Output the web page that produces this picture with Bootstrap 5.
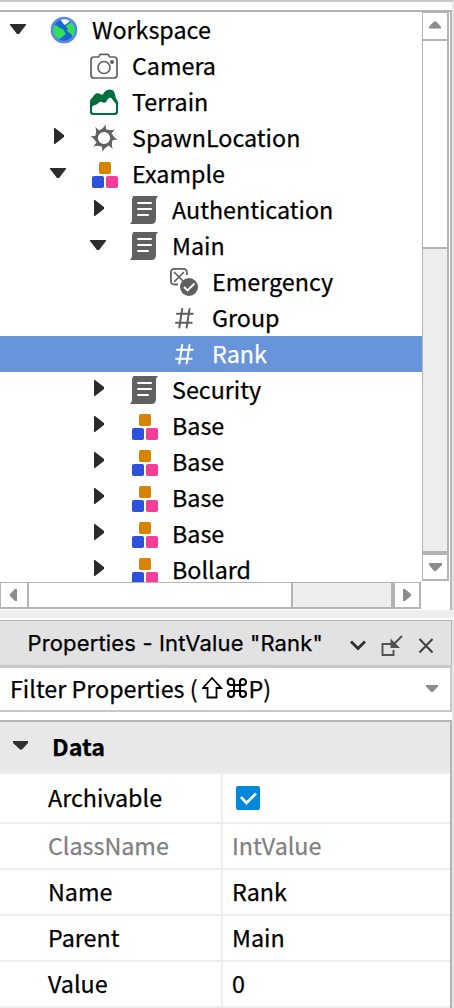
<!DOCTYPE html>
<html lang="en">
<head>
<meta charset="utf-8">
<meta name="viewport" content="width=device-width, initial-scale=1">
<title>Explorer</title>
<link href="https://cdn.jsdelivr.net/npm/bootstrap@5.3.0/dist/css/bootstrap.min.css" rel="stylesheet">
<style>
body{font-family:"Noto Sans CJK SC",sans-serif;font-size:23.3px;line-height:36px;color:#000;background:#fff;width:454px;height:1008px;overflow:hidden;-webkit-text-stroke:.25px currentColor}
svg{display:block;flex:none}
.explorer{height:610px;border-top:2px solid #c8c8c8;padding-top:8px;border-right:2px solid #e5e5e5}
.explorer-frame{height:600px;border-top:2px solid #b4b4b4;border-right:2px solid #b8b8b8}
.tree{width:422px;height:570px}
.tree-row{height:36px;padding-left:10px;white-space:nowrap}
.tree-row.l1{padding-left:50px}.tree-row.l2{padding-left:90px}.tree-row.l3{padding-left:130px}
.tree-row.selected{background:#6894d9;color:#fff}
.arrow{width:40px;height:28px;flex:none;color:#2c2c2c}
.label{margin-left:14px;line-height:34px;padding-bottom:2px}
.ico{color:#606060}
.selected .ico{color:#fff}
.vbar{width:27px;height:569px;border:solid #b4b4b4;border-width:1px 2px 2px 1px}
.vbar .b-top{height:28px;border-bottom:2px solid #b4b4b4}
.vbar .thumb{height:208px;border-bottom:2px solid #b4b4b4}
.vbar .track{background:#ededed}
.vbar .b-bot{height:28px;flex:none;border-top:4px solid #b4b4b4}
.hbar{width:421px;height:27px;border:solid #b4b4b4;border-width:1px 2px 2px 1px}
.hbar .b-left{width:28px;flex:none;border-right:2px solid #b4b4b4}
.hbar .thumb{width:264px;flex:none;border-right:2px solid #b4b4b4}
.hbar .track{background:#ededed}
.hbar .b-right{width:28px;flex:none;border-left:4px solid #b4b4b4}
.splitter{height:8px;background:#eee}
.props{height:390px;padding-top:2px}
.titlebar{height:45px;width:452px;background:#e2e2e2;border:solid #b4b4b4;border-width:1px 1px 0 0;font-family:Inter,sans-serif;font-size:22px;padding-left:27.500px}
.title-text{width:314.500px;letter-spacing:.15px;white-space:nowrap}
.filter{height:47px;width:452px;border:solid #c8c8c8;border-width:3px 2px 2px 0;padding:0 12px 0 10px}
.filter-text{padding-bottom:2px}
.grid-frame{margin-top:8px;width:452px;height:288px;border:solid #b4b4b4;border-width:2px 2px 0 0}
.group{height:52px;background:#e8e8e8;border-bottom:2px solid #eee;font-weight:700;padding-left:13px}
.group-name{margin-left:23px;padding-bottom:3px}
.prop{height:46px;border-bottom:2px solid #eee}
.prop.tall{height:50px}
.prop-key{width:223px;padding:0 0 2px 48px;border-right:2px solid #eee}
.prop-val{padding:0 0 2px 9px}
.check{margin:2px 0 0 4px}
.readonly{color:#808080}
.edge{background:#e5e5e5;width:2px}
</style>
</head>
<body>
<svg width="0" height="0" class="position-absolute">
<symbol id="down" viewBox="0 0 40 28"><path d="M0 8h16v1L9 18H7L0 9z" fill="currentColor"/></symbol>
<symbol id="right" viewBox="0 0 40 28"><path d="M4 4h1l9 7v2l-9 7H4z" fill="currentColor"/></symbol>
<symbol id="model" viewBox="0 0 28 28"><rect x="9" y="2" width="12" height="12" rx="1.8" fill="#d58300"/><rect x="2" y="16" width="12" height="12" rx="1.8" fill="#2c52dc"/><rect x="16" y="16" width="12" height="12" rx="1.8" fill="#f43e98"/></symbol>
<symbol id="script" viewBox="0 0 28 28"><path d="M3.500 0H28c-1.700 1.500-2 3-2 5v17c0 3-1 6-4 6H0c1.700-1.500 2-3 2-5V5c0-2 .3-4 1.500-5z" fill="#606060"/><path d="M8 7h13M8 13h13M8 19h10" stroke="#fff" stroke-width="2.100" stroke-linecap="round"/></symbol>
<symbol id="hash" viewBox="0 0 28 28"><path d="M12.200 5 9.300 23.500M19.500 5l-2.900 18.500M7 9.700h15.700M6 18.700h15.700" fill="none" stroke="currentColor" stroke-width="2" stroke-linecap="round"/></symbol>
<symbol id="globe" viewBox="0 0 28 28"><circle cx="14" cy="14" r="12.100" fill="#1668cf"/><path d="M3 8.500c2 .8 3.500.5 5 2 1.200 1.300 2.500 1.800 4.500 2.500 2 .8 1.500 3 2.700 4 .8.800.3 2-1 2.600-2.200.8-2 2.400-4.700 3.400C5.500 22 2.300 18.500 2 15zM16 9.500c1-1 3.700-1.800 5.300-4C24 7.500 25.800 11 26 14c0 3-1.300 6.500-3.700 8.500-1-1.500.5-3-1-4.500-1-1-3.500-1.200-4-3-.4-1.500.8-1.500.5-2.500-.3-1-2-1-1.800-3z" fill="#35de58"/><path d="M11 3c3-1 8-.6 10.200 1-1.500.8-2.500 2.500-4.200 3.500-1 .7-2 1.600-2.700 1.200C13 8 13 6 11 5z" fill="#fff"/><circle cx="14" cy="14" r="12" fill="none" stroke="#5388ed" stroke-width="2.600"/></symbol>
</svg>

<section class="explorer">
<div class="explorer-frame">
<div class="d-flex">
<div class="tree overflow-hidden">
<div class="tree-row d-flex align-items-center"><svg class="arrow"><use href="#down"/></svg><svg width="28" height="28"><use href="#globe"/></svg><span class="label">Workspace</span></div>
<div class="tree-row l1 d-flex align-items-center"><span class="arrow"></span><svg class="ico" width="28" height="28" viewBox="0 -1 28 28" fill="none" stroke="currentColor" stroke-width="1.700"><path d="M4 4h4.300c1 0 .9-2.700 2.300-2.700h7c1.400 0 1.300 2.700 2.300 2.700H24c2.200 0 3 .9 3 3v15c0 2.100-.8 3-3 3H4c-2.200 0-3-.9-3-3V7c0-2.100.8-3 3-3z"/><circle cx="14" cy="14.500" r="6"/><circle cx="22" cy="9" r="2" fill="currentColor" stroke="none"/></svg><span class="label">Camera</span></div>
<div class="tree-row l1 d-flex align-items-center"><span class="arrow"></span><svg width="28" height="28" viewBox="0 -.9 28 28"><path fill="#006f3c" fill-rule="evenodd" d="M0 13c0-3 2.500-4 4-6.500C6 3.500 9 4.200 11 5.500c1.500 1 2-.5 3.500-2.500C17 0 22-.5 24 2.800c1.500 2.700 1 5.700 3 8.200.8 1 1 2 1 3v9c0 2-1 3-3 3H3c-2 0-3-1-3-3zM2 20v2c0 1.300.7 2 2 2h20c1.300 0 2-.7 2-2v-6c0-2-2.200-3.500-3.500-5.500C21 8 18.500 8.500 17 11.500c-1 2-2.500 3-4.500 1.800-1.500-1-3-.5-4 .7S5.500 16 4 16.300C2.500 16.700 2 18 2 20z"/></svg><span class="label">Terrain</span></div>
<div class="tree-row l1 d-flex align-items-center"><svg class="arrow"><use href="#right"/></svg><svg width="28" height="28" viewBox="0 0 28 28"><g fill="#606060"><path id="ray" d="M10 6C13 4.500 14.500 2.500 15.500 0L16.200 7z"/><use href="#ray" transform="rotate(45 14 14)"/><use href="#ray" transform="rotate(90 14 14)"/><use href="#ray" transform="rotate(135 14 14)"/><use href="#ray" transform="rotate(180 14 14)"/><use href="#ray" transform="rotate(225 14 14)"/><use href="#ray" transform="rotate(270 14 14)"/><use href="#ray" transform="rotate(315 14 14)"/></g><circle cx="14" cy="14" r="7.500" fill="#fff" stroke="#606060" stroke-width="2.800"/></svg><span class="label">SpawnLocation</span></div>
<div class="tree-row l1 d-flex align-items-center"><svg class="arrow"><use href="#down"/></svg><svg width="28" height="28"><use href="#model"/></svg><span class="label">Example</span></div>
<div class="tree-row l2 d-flex align-items-center"><svg class="arrow"><use href="#right"/></svg><svg width="28" height="28"><use href="#script"/></svg><span class="label">Authentication</span></div>
<div class="tree-row l2 d-flex align-items-center"><svg class="arrow"><use href="#down"/></svg><svg width="28" height="28"><use href="#script"/></svg><span class="label">Main</span></div>
<div class="tree-row l3 d-flex align-items-center"><span class="arrow"></span><svg class="ico" width="28" height="28" viewBox="0 0 28 28" fill="none" stroke="currentColor"><path d="M8 16.500H4.500c-2.400 0-3.600-1.100-3.600-3.500V4.500C.9 2.100 2.100.9 4.500.9H13c2.400 0 3.900 1.200 3.900 3.600V7" stroke-width="1.800"/><path d="m4.500 4.500 9 9m0-9-9 9" stroke-width="1.700" stroke-linecap="round"/><circle cx="19" cy="19" r="9" fill="currentColor" stroke="none"/><path d="m14 19 3.500 3.500 7-7" stroke="#fff" stroke-width="1.900"/></svg><span class="label">Emergency</span></div>
<div class="tree-row l3 d-flex align-items-center"><span class="arrow"></span><svg class="ico" width="28" height="28"><use href="#hash"/></svg><span class="label">Group</span></div>
<div class="tree-row l3 d-flex align-items-center selected"><span class="arrow"></span><svg class="ico" width="28" height="28"><use href="#hash"/></svg><span class="label">Rank</span></div>
<div class="tree-row l2 d-flex align-items-center"><svg class="arrow"><use href="#right"/></svg><svg width="28" height="28"><use href="#script"/></svg><span class="label">Security</span></div>
<div class="tree-row l2 d-flex align-items-center"><svg class="arrow"><use href="#right"/></svg><svg width="28" height="28"><use href="#model"/></svg><span class="label">Base</span></div>
<div class="tree-row l2 d-flex align-items-center"><svg class="arrow"><use href="#right"/></svg><svg width="28" height="28"><use href="#model"/></svg><span class="label">Base</span></div>
<div class="tree-row l2 d-flex align-items-center"><svg class="arrow"><use href="#right"/></svg><svg width="28" height="28"><use href="#model"/></svg><span class="label">Base</span></div>
<div class="tree-row l2 d-flex align-items-center"><svg class="arrow"><use href="#right"/></svg><svg width="28" height="28"><use href="#model"/></svg><span class="label">Base</span></div>
<div class="tree-row l2 d-flex align-items-center"><svg class="arrow"><use href="#right"/></svg><svg width="28" height="28"><use href="#model"/></svg><span class="label">Bollard</span></div>
</div>
<div class="vbar d-flex flex-column">
<div class="b-top"><svg width="24" height="26"><path d="M6 15.500v-2l5-5h2l5 5v2z" fill="#8c8c8c"/></svg></div>
<div class="thumb flex-shrink-0"></div>
<div class="track flex-grow-1"></div>
<div class="b-bot"><svg width="24" height="24"><path d="M6 8v2l5 6h2l6-6V8z" fill="#8c8c8c"/></svg></div>
</div>
</div>
<div class="hbar d-flex">
<div class="b-left"><svg width="26" height="24"><path d="M16 6v12h-2l-5-5v-2l5-5z" fill="#8c8c8c"/></svg></div>
<div class="thumb"></div>
<div class="track flex-grow-1"></div>
<div class="b-right"><svg width="24" height="24"><path d="M8 6v12h2l6-5v-2l-6-5z" fill="#8c8c8c"/></svg></div>
</div>
</div>
</section>
<div class="splitter"></div>
<section class="props d-flex">
<div>
<header class="titlebar d-flex align-items-center">
<span class="title-text">Properties - IntValue "Rank"</span>
<svg width="96" height="44" viewBox="0 0 96 44" fill="none"><path d="m9 20.500 7 7 7-7" stroke="#303030" stroke-width="2.800"/><path d="M49 23h-8.500v11h11v-5" stroke="#505050" stroke-width="1.900"/><path d="m60 15-8 8" stroke="#505050" stroke-width="1.900"/><path d="M48.500 17.500v9.500H58z" fill="#505050"/><path d="m77.500 18 13 13.500m0-13.500-13 13.500" stroke="#404040" stroke-width="2"/></svg>
</header>
<div class="filter d-flex align-items-center justify-content-between">
<span class="filter-text d-flex align-items-center">Filter Properties (<svg class="ms-1" width="21" height="24" viewBox="0 0 21 24" fill="none" stroke="#000" stroke-width="1.800"><path d="M10 2 .9 12H5.500v9.500h9V12h4.600z"/></svg><svg style="margin-left:2px" width="24" height="24" viewBox="0 0 24 24" fill="none" stroke="#000" stroke-width="2.100"><path d="M9 9V6a3.200 3.200 0 1 0-3.200 3H18a3 3 0 1 0-3-3v12a3 3 0 1 0 3-3H6a3 3 0 1 0 3 3z"/></svg>P)</span>
<svg width="12" height="8"><path d="M0 0h12v1.500L7 7H5L0 1.500z" fill="#8c8c8c"/></svg>
</div>
<div class="grid-frame">
<div class="group d-flex align-items-center"><svg width="16" height="14"><path d="M0 1h15v2L9 9.500H7L0 3z" fill="#303030"/></svg><span class="group-name">Data</span></div>
<div class="prop tall d-flex"><div class="prop-key d-flex align-items-center">Archivable</div><div class="prop-val d-flex align-items-center"><svg class="check" width="24" height="24"><rect width="24" height="24" rx="2" fill="#0088dd"/><path d="m5 11 5.500 6L20 7.500" fill="none" stroke="#fff" stroke-width="2.600"/></svg></div></div>
<div class="prop d-flex readonly"><div class="prop-key d-flex align-items-center">ClassName</div><div class="prop-val d-flex align-items-center">IntValue</div></div>
<div class="prop d-flex"><div class="prop-key d-flex align-items-center">Name</div><div class="prop-val d-flex align-items-center">Rank</div></div>
<div class="prop d-flex"><div class="prop-key d-flex align-items-center">Parent</div><div class="prop-val d-flex align-items-center">Main</div></div>
<div class="prop d-flex"><div class="prop-key d-flex align-items-center">Value</div><div class="prop-val d-flex align-items-center">0</div></div>
</div>
</div>
<div class="edge"></div>
</section>
<script src="https://cdn.jsdelivr.net/npm/bootstrap@5.3.0/dist/js/bootstrap.bundle.min.js"></script>
</body>
</html>
